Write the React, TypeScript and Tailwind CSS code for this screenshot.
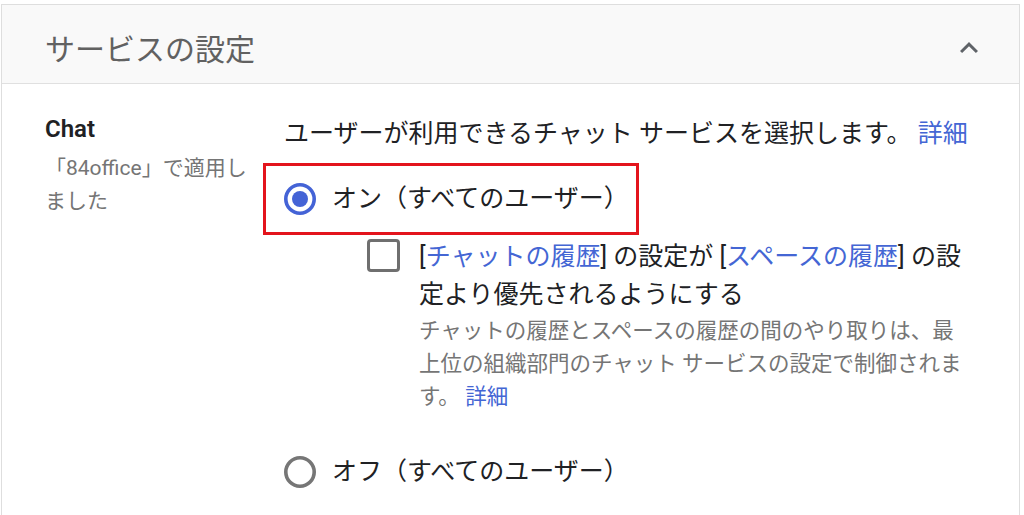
import React from "react";

const Radio = ({ checked }: { checked: boolean }) => (
  <svg width="32" height="32" viewBox="0 0 32 32" className="shrink-0">
    {checked ? (
      <>
        <circle cx="16" cy="16" r="14.2" fill="none" stroke="#4463d6" strokeWidth="3.6" />
        <circle cx="16" cy="16" r="8" fill="#4463d6" />
      </>
    ) : (
      <circle cx="16" cy="16" r="14.2" fill="none" stroke="#767676" strokeWidth="3.6" />
    )}
  </svg>
);

export default function App() {
  return (
    <div className="w-[1024px] h-[515px] overflow-hidden bg-white pt-[4px] pl-[1px] pr-[4px] font-[Roboto,'Noto_Sans_CJK_JP',sans-serif]">
      <div className="border border-[#dedede] h-[560px]">
        <div className="h-[79px] bg-[#f9f9f9] border-b border-[#e0e0e0] flex items-start justify-between pl-[43px] pr-[32px]">
          <h2 className="text-[30px] leading-[30px] pt-[30px] text-[#616161]">サービスの設定</h2>
          <svg width="36" height="36" viewBox="0 0 24 24" className="mt-[25px]">
            <path d="M12 8l-6 6 1.41 1.41L12 10.83l4.59 4.58L18 14z" fill="#5f6368" />
          </svg>
        </div>
        <div className="flex">
          <div className="w-[282px] shrink-0 pl-[43px] pr-[12px] pt-[31px]">
            <div className="text-[24px] leading-[28px] font-semibold text-[#202124]">Chat</div>
            <div className="mt-[9px] text-[21px] leading-[33px] text-[#757575] whitespace-nowrap">
              <div>「84office」で適用し</div>
              <div>ました</div>
            </div>
          </div>
          <div className="flex-1 pt-[34px] pr-[40px]">
            <p className="text-[25px] leading-[32px] text-[#202124] whitespace-nowrap">
              ユーザーが利用できるチャット サービスを選択します。 <span className="text-[#4466d4]">詳細</span>
            </p>
            <div className="mt-[13px] -ml-[21px] w-[376px] h-[72px] border-[3px] border-[#e3141c] flex items-center pl-[18px] gap-[16px]">
              <Radio checked />
              <span className="text-[25px] leading-[32px] text-[#202124] whitespace-nowrap">オン（すべてのユーザー）</span>
            </div>
            <div className="mt-[3px] ml-[83px] flex gap-[19px]">
              <div className="w-[33px] h-[33px] mt-[1px] shrink-0 border-[3.5px] border-[#6f6f6f] rounded-[4px]" />
              <div className="flex-1 whitespace-nowrap">
                <div className="text-[25px] leading-[38px] text-[#202124]">
                  <div>
                    [<span className="text-[#4466d4]">チャットの履歴</span>] の設定が [<span className="text-[#4466d4]">スペースの履歴</span>] の設
                  </div>
                  <div>定より優先されるようにする</div>
                </div>
                <div className="text-[21.5px] leading-[33px] text-[#757575]">
                  <div>チャットの履歴とスペースの履歴の間のやり取りは、最</div>
                  <div>上位の組織部門のチャット サービスの設定で制御されま</div>
                  <div>
                    す。 <span className="text-[#4466d4]">詳細</span>
                  </div>
                </div>
              </div>
            </div>
            <div className="mt-[43px] flex items-center gap-[16px] h-[32px]">
              <Radio checked={false} />
              <span className="text-[25px] leading-[32px] text-[#202124] whitespace-nowrap">オフ（すべてのユーザー）</span>
            </div>
          </div>
        </div>
      </div>
    </div>
  );
}
